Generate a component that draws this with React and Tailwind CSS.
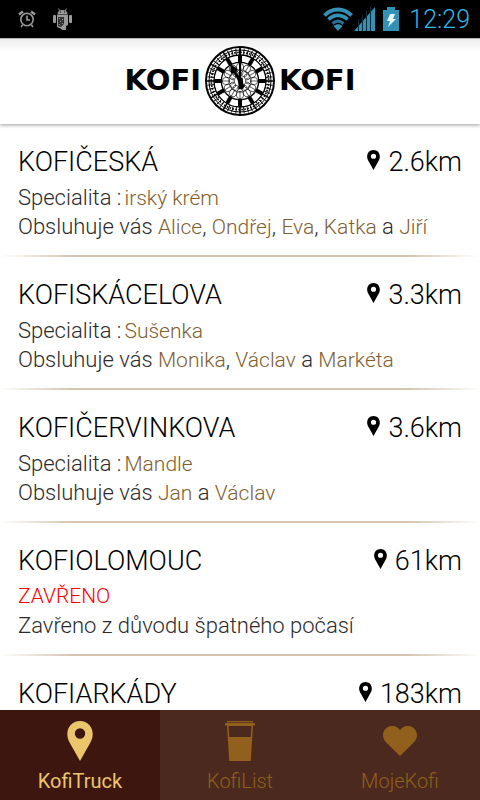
import React from "react";

const SHOPS = [
  { name: "KOFIČESKÁ", distance: "2.6km", special: "irský krém", staff: ["Alice", "Ondřej", "Eva", "Katka", "Jiří"] },
  { name: "KOFISKÁCELOVA", distance: "3.3km", special: "Sušenka", staff: ["Monika", "Václav", "Markéta"] },
  { name: "KOFIČERVINKOVA", distance: "3.6km", special: "Mandle", staff: ["Jan", "Václav"] },
  { name: "KOFIOLOMOUC", distance: "61km", closed: "Zavřeno z důvodu špatného počasí" },
  { name: "KOFIARKÁDY", distance: "183km" },
];

function Pin({ className }) {
  return (
    <svg viewBox="0 0 26 40" className={className} fill="currentColor" aria-hidden="true">
      <path
        fillRule="evenodd"
        d="M13 0C5.600 0 .3 5.600 .3 13c0 3.400 1 6 2.700 9.200L13 40l10-17.800c1.700-3.200 2.700-5.800 2.700-9.200C25.700 5.600 20.400 0 13 0zm0 7.300a5.200 5.200 0 1 1 0 10.400 5.200 5.200 0 0 1 0-10.400z"
      />
    </svg>
  );
}

function Cup() {
  return (
    <svg viewBox="0 0 30 40" className="h-10 w-[30px]" fill="currentColor" aria-hidden="true">
      <path d="M2 0h26v1.300H2z" />
      <path d="M0 2h30v2.500H0z" />
      <path fillRule="evenodd" d="M2 4h26l-2.200 36H4.200zM3.600 5 4.300 16h21.400l.7-11z" />
    </svg>
  );
}

function Heart() {
  return (
    <svg viewBox="0 0 34 30" className="h-[30px] w-[34px]" fill="currentColor" aria-hidden="true">
      <path d="M17 30 3.500 16.700C1.200 14.400 0 12 0 9.300 0 4.200 4 0 9 0c3.400 0 6.300 1.500 8 4.200C18.700 1.500 21.600 0 25 0c5 0 9 4.200 9 9.300 0 2.700-1.200 5.100-3.500 7.400z" />
    </svg>
  );
}

const ring = (count) => Array.from({ length: count }, (_, i) => (i * 360) / count);

function Clock() {
  return (
    <svg viewBox="-105 -105 210 210" className="size-[70px] shrink-0" aria-hidden="true">
      <circle r="102" fill="#fff" stroke="#000" strokeWidth="6" />
      <circle r="93" fill="none" stroke="#000" strokeWidth="3" />
      <circle r="86" fill="none" stroke="#000" strokeWidth="5" strokeDasharray="5 4" />
      <circle r="78" fill="none" stroke="#000" strokeWidth="4" />
      {ring(48).map((a) => (
        <path key={a} d="M0-98V-78" stroke="#000" strokeWidth="2.500" transform={`rotate(${a})`} />
      ))}
      {ring(12).map((a) => (
        <g key={a} transform={`rotate(${a})`} stroke="#000">
          <path d="M0-102V-54" strokeWidth="4" />
          <path d="M0-77V-56" strokeWidth="12" />
        </g>
      ))}
      <circle r="56" fill="none" stroke="#000" strokeWidth="4" />
      <g fill="none" stroke="#000" strokeWidth="1.800">
        {ring(12).map((a) => (
          <g key={a} transform={`rotate(${a})`}>
            <circle cy="-42" r="11" />
            <circle cy="-25" r="9" />
            <path d="M0-54V-30" />
          </g>
        ))}
      </g>
      <path d="M-3 18-3-98H3L4 18z" />
      <g transform="rotate(-30)">
        <path d="M-5 8-4-28-11-34-8-44 0-56 8-44 11-34 4-28 6 8z" />
      </g>
      <path d="M-8-10H8L10 8 14 16 8 25H-4L-5 10z" />
    </svg>
  );
}

function StatusBar() {
  return (
    <div className="flex h-[38px] shrink-0 items-center bg-black px-[18px]">
      <svg viewBox="0 0 18 18" className="size-[18px]" fill="none" stroke="#9a9a9a" strokeWidth="1.6" aria-hidden="true">
        <circle cx="9" cy="9.500" r="6.200" />
        <path d="M9 5.500V10h3M4.500 15 3 17M13.500 15l1.500 2" />
        <path d="M1 4.500 5 1.500M17 4.500 13 1.500" strokeWidth="2.400" />
      </svg>
      <svg viewBox="0 0 19 22" className="ml-[17px] h-[22px] w-[19px]" fill="#9a9a9a" aria-hidden="true">
        <path d="M5 5.500C5 3.600 6.900 2.500 9.500 2.500S14 3.600 14 5.500zM5.500.5l1.500 2.500M13.500.5 12 3" stroke="#9a9a9a" />
        <rect x="0" y="7" width="3" height="8" rx="1" />
        <rect x="16" y="7" width="3" height="8" rx="1" />
        <path d="M4 6.500h11V17l-2 1v4H9.500l-2-1.500L4 19z" />
        <path d="M5 9h6v7l-3 3-3-1z" fill="#333" />
        <path d="M6 10h1v1H6zM9 11h1v1H9zM7 13h1v1H7zM6 16h1v1H6zM9 15h1v1H9z" />
        <path d="M7 3.500h1v1H7zM11 3.500h1v1h-1z" fill="#000" />
      </svg>
      <svg viewBox="0 0 30 24" className="ml-auto h-6 w-[30px]" fill="none" stroke="#3391b5" aria-hidden="true">
        <path d="M1.500 8.500C9 .5 21 .5 28.500 8.500" strokeWidth="4" />
        <path d="M5.500 12.500c5.500-5.500 13.500-5.500 19 0" strokeWidth="3.600" />
        <path d="M9.500 16.500c3.500-3 7.500-3 11 0" strokeWidth="3" stroke="#24708e" />
        <path d="M15 24l-4.500-5c3-2.400 6-2.400 9 0z" fill="#3391b5" stroke="none" />
      </svg>
      <svg viewBox="0 0 21 24" className="ml-px h-6 w-[21px]" aria-hidden="true">
        <path d="M0 24 21 0V24z" fill="#3391b5" />
        <path d="M4.500 12v12M8.500 8v16M12.500 4v20M16.500 0v24" stroke="#0b2b38" />
      </svg>
      <svg viewBox="0 0 16 24" className="ml-2 h-6 w-4" aria-hidden="true">
        <path d="M0 3h4V0h8v3h4v21H0z" fill="#3391b5" />
        <path d="M7 7h5l-2 5h3L5 20l2-6H4z" fill="#e6f4fa" />
      </svg>
      <time className="-mr-2 ml-2.5 text-[25px] leading-none font-light text-[#33b5e5]">12:29</time>
    </div>
  );
}

function Name({ children }) {
  return <span className="text-[21px] leading-none text-[#80602f]">{children}</span>;
}

function Staff({ names }) {
  return names.map((n, i) => (
    <React.Fragment key={n}>
      {i > 0 && (i === names.length - 1 ? " a " : ", ")}
      <Name>{n}</Name>
    </React.Fragment>
  ));
}

function Shop({ shop }) {
  return (
    <li>
      <div className="px-[18px] pt-[21px] pb-3.5">
        <div className="flex items-center justify-between text-[27px] leading-[34px] font-light text-black">
          <h2>{shop.name}</h2>
          <span className="flex items-center gap-2">
            <Pin className="mb-1 h-5 w-[13px]" />
            {shop.distance}
          </span>
        </div>
        <div className="mt-1 text-[22px] leading-[29px] font-light text-[#2b2b2b]">
          {shop.closed && (
            <>
              <p className="text-[21px] text-[#f00]">ZAVŘENO</p>
              <p>{shop.closed}</p>
            </>
          )}
          {shop.special && (
            <>
              <p className="flex items-baseline gap-[3px]">
                Specialita :<Name>{shop.special}</Name>
              </p>
              <p>
                Obsluhuje vás <Staff names={shop.staff} />
              </p>
            </>
          )}
        </div>
      </div>
      <div className="h-0.5 bg-[linear-gradient(to_right,transparent,#d4c4b0_15%,#d4c4b0_85%,transparent)]" />
    </li>
  );
}

function Tab({ label, active, children }) {
  return (
    <button
      type="button"
      aria-current={active ? "page" : undefined}
      className={
        "flex flex-1 flex-col items-center pt-[11px] text-[20px] leading-6 " +
        (active ? "bg-[#3d1610] font-normal text-[#eac56c]" : "bg-[#4b291e] font-light text-[#91601d]")
      }
    >
      <span className="flex h-10 items-center">{children}</span>
      <span className="mt-2">{label}</span>
    </button>
  );
}

export default function App() {
  return (
    <div className="flex h-screen flex-col overflow-hidden bg-white font-[Roboto,sans-serif]">
      <StatusBar />
      <header className="z-10 shrink-0 border-t border-[#b5b2b2] bg-linear-to-b from-[#ececec] to-white to-15% shadow-[0_1px_4px_rgba(0,0,0,0.4)]">
        <h1 className="flex h-[85px] items-center justify-center gap-1 pb-0.5 font-['DejaVu_Sans',sans-serif] text-[29px] leading-none font-bold text-black">
          <span>KOFI</span>
          <Clock />
          <span>KOFI</span>
        </h1>
      </header>
      <main className="min-h-0 flex-1 overflow-hidden">
        <ul>
          {SHOPS.map((s) => (
            <Shop key={s.name} shop={s} />
          ))}
        </ul>
      </main>
      <nav className="flex h-[90px] shrink-0">
        <Tab label="KofiTruck" active>
          <Pin className="h-10 w-[26px]" />
        </Tab>
        <Tab label="KofiList">
          <Cup />
        </Tab>
        <Tab label="MojeKofi">
          <Heart />
        </Tab>
      </nav>
    </div>
  );
}
